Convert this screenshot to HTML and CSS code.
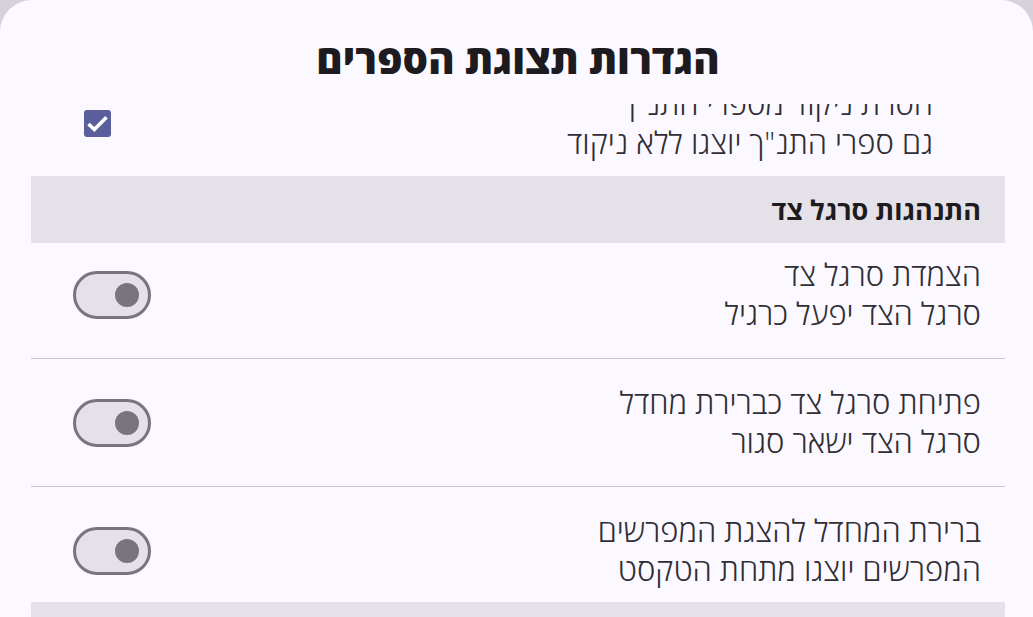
FILE: index.html
```html
<!DOCTYPE html>
<html lang="he" dir="rtl">
<head>
	<meta charset="UTF-8">
	<title>הגדרות תצוגת הספרים</title>
	<link rel="stylesheet" href="styles.css">
</head>
<body>
	<div class="dialog">
		<h1 class="title">הגדרות תצוגת הספרים</h1>
		<div class="list">
			<div class="item check-item">
				<div class="texts">
					<div class="line">הסרת ניקוד מספרי התנ"ך</div>
					<div class="line sub">גם ספרי התנ"ך יוצגו ללא ניקוד</div>
				</div>
				<span class="checkbox">
					<svg width="27" height="27" viewBox="0 0 18 18">
						<path d="M3 9.3 L6.9 13 L15 4.9" fill="none" stroke="#fff" stroke-width="2.4"/>
					</svg>
				</span>
			</div>

			<div class="section-header">התנהגות סרגל צד</div>

			<div class="item row first">
				<div class="texts">
					<div class="line">הצמדת סרגל צד</div>
					<div class="line sub">סרגל הצד יפעל כרגיל</div>
				</div>
				<span class="switch"><span class="thumb"></span></span>
			</div>
			<div class="item row">
				<div class="texts">
					<div class="line">פתיחת סרגל צד כברירת מחדל</div>
					<div class="line sub">סרגל הצד ישאר סגור</div>
				</div>
				<span class="switch"><span class="thumb"></span></span>
			</div>
			<div class="item row last">
				<div class="texts">
					<div class="line">ברירת המחדל להצגת המפרשים</div>
					<div class="line sub">המפרשים יוצגו מתחת הטקסט</div>
				</div>
				<span class="switch"><span class="thumb"></span></span>
			</div>

			<div class="section-header">&nbsp;</div>
		</div>
	</div>
</body>
</html>
```

FILE: styles.css
```css
* {
	box-sizing: border-box;
}

html,
body {
	height: 100%;
}

body {
	margin: 0;
	background: #d5d3d9;
	font-family: "Open Sans", "DejaVu Sans", sans-serif;
	color: #1d1b20;
	overflow: hidden;
}

.dialog {
	height: 100%;
	display: flex;
	flex-direction: column;
	background: #fbf8ff;
	border-radius: 32px 32px 0 0;
	padding: 0 28px 0 31px;
}

.title {
	flex-shrink: 0;
	margin: 0;
	height: 104px;
	padding-top: 35px;
	font-size: 40px;
	line-height: 48px;
	font-weight: 800;
	text-align: center;
	color: #1d1b20;
}

/* the list is scrolled a little, first row is cut at the top */
.list {
	flex: 1;
	min-height: 0;
	overflow: hidden;
}

.item {
	display: flex;
	align-items: center;
	justify-content: space-between;
}

.texts {
	padding-bottom: 1px;
}

.line {
	font-size: 31px;
	font-weight: 300;
	line-height: 39px;
	white-space: nowrap;
	color: #302e34;
}

.check-item {
	margin-top: -20px;
	padding: 0 72px 13px 0;
}

.check-item .checkbox {
	margin-left: 53px;
	width: 27px;
	height: 27px;
	border-radius: 3px;
	background: #5a5f9b;
	display: flex;
}

.section-header {
	height: 67px;
	display: flex;
	align-items: center;
	padding: 0 24px;
	background: #e4e1e8;
	font-size: 27px;
	font-weight: 700;
	color: #1d1b20;
}

.row {
	padding: 24px 24px 24px 42px;
	border-bottom: 1px solid #cac4d0;
}

.row.first {
	margin-top: -12px;
}

.row.last {
	border-bottom: none;
	margin-bottom: -12px;
}

/* switch, off state */

.switch {
	width: 78px;
	height: 48px;
	border: 3px solid #79747e;
	border-radius: 24px;
	background: #e6e0e9;
	display: flex;
	align-items: center;
	padding: 0 9px;
}

.switch .thumb {
	width: 24px;
	height: 24px;
	border-radius: 50%;
	background: #79747e;
}
```
